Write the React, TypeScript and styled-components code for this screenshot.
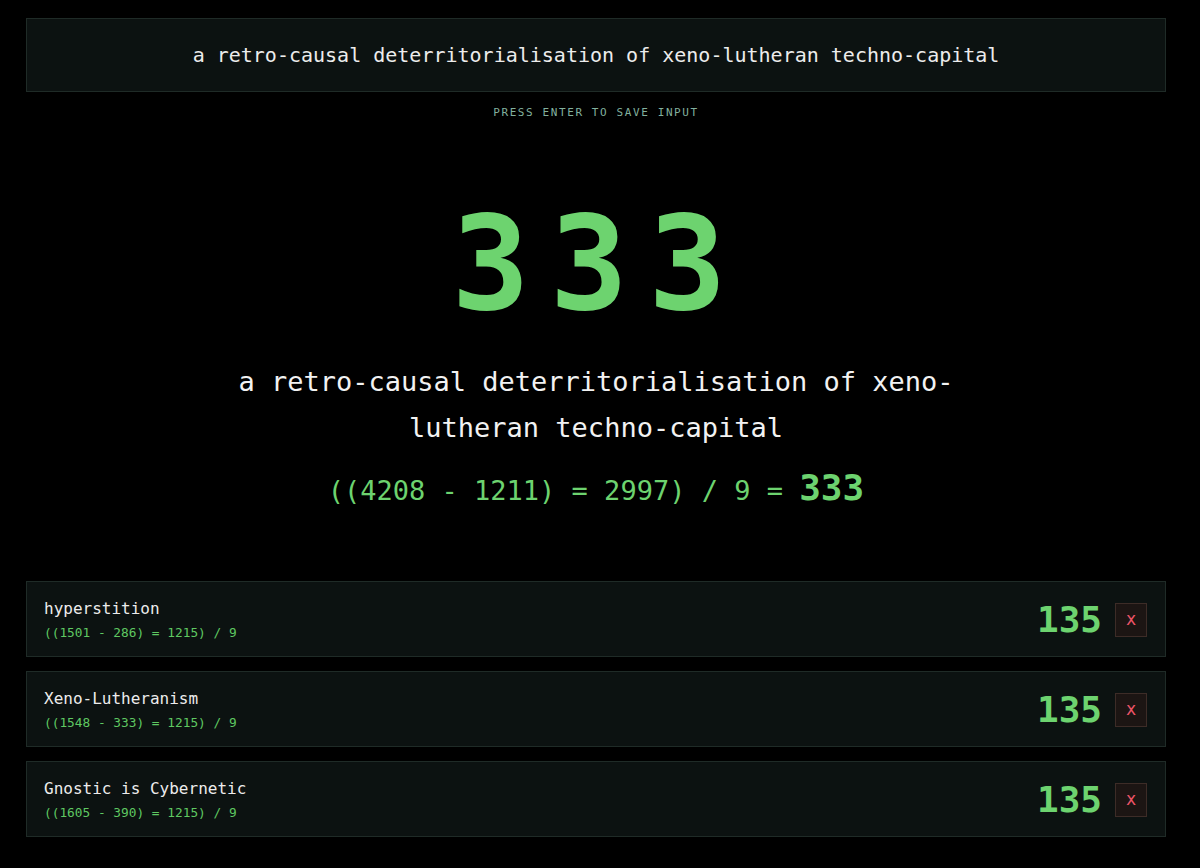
import { useState } from "react";
import styled, { createGlobalStyle } from "styled-components";

const GlobalStyle = createGlobalStyle`
    html, body {
        margin: 0;
        background: #000;
    }
    body {
        font-family: "DejaVu Sans Mono", "Liberation Mono", monospace;
        color: #ececec;
    }
`;

const Page = styled.div`
    padding: 18px 34px 32px 26px;
    display: flex;
    flex-direction: column;
`;

const Input = styled.input`
    box-sizing: border-box;
    width: 100%;
    height: 74px;
    background: #0c1211;
    border: 1px solid #1f2b27;
    border-radius: 0;
    color: #ececec;
    font-family: inherit;
    font-size: 20px;
    text-align: center;
    outline: none;
    padding: 0 16px;
`;

const Hint = styled.div`
    margin-top: 14px;
    text-align: center;
    font-size: 11px;
    line-height: 13px;
    letter-spacing: 1.6px;
    color: #82b09e;
`;

const Result = styled.section`
    display: flex;
    flex-direction: column;
    align-items: center;
    margin-top: 80px;
`;

const BigNumber = styled.div`
    font-size: 130px;
    line-height: 1;
    font-weight: 700;
    letter-spacing: 20px;
    padding-left: 6px;
    color: #6dd36f;
`;

const Phrase = styled.div`
    margin-top: 30px;
    max-width: 800px;
    text-align: center;
    font-size: 27px;
    line-height: 46px;
    color: #f2f2f2;
`;

const Formula = styled.div`
    margin-top: 12px;
    font-size: 27px;
    line-height: 50px;
    color: #6dd36f;
    white-space: pre;
`;

const FormulaResult = styled.span`
    font-size: 36px;
    font-weight: 700;
`;

const List = styled.ul`
    list-style: none;
    margin: 65px 0 0;
    padding: 0;
    display: flex;
    flex-direction: column;
    gap: 14px;
`;

const Card = styled.li`
    box-sizing: border-box;
    height: 76px;
    display: flex;
    align-items: center;
    justify-content: space-between;
    padding: 1px 18px 0 17px;
    background: #0c1211;
    border: 1px solid #1f2b27;
`;

const Info = styled.div`
    display: flex;
    flex-direction: column;
    gap: 7px;
`;

const Name = styled.span`
    font-size: 16px;
    line-height: 1.2;
    color: #ececec;
`;

const Calc = styled.span`
    font-size: 12.8px;
    line-height: 1.2;
    color: #5fc862;
    white-space: pre;
`;

const Side = styled.div`
    display: flex;
    align-items: center;
    gap: 13px;
`;

const Score = styled.span`
    font-size: 36px;
    font-weight: 700;
    color: #6dd36f;
`;

const RemoveButton = styled.button`
    width: 32px;
    height: 34px;
    padding: 0;
    background: #1c1513;
    border: 1px solid #3d2c27;
    border-radius: 0;
    color: #ee5468;
    font-family: inherit;
    font-size: 17px;
    line-height: 1;
    cursor: pointer;
`;

interface IEntry {
    id: number;
    text: string;
    calc: string;
    score: number;
}

const initial: IEntry[] = [
    { id: 1, text: "hyperstition", calc: "((1501 - 286) = 1215) / 9", score: 135 },
    { id: 2, text: "Xeno-Lutheranism", calc: "((1548 - 333) = 1215) / 9", score: 135 },
    { id: 3, text: "Gnostic is Cybernetic", calc: "((1605 - 390) = 1215) / 9", score: 135 },
];

export default function App() {
    const [value, setValue] = useState("a retro-causal deterritorialisation of xeno-lutheran techno-capital");
    const [entries, setEntries] = useState<IEntry[]>(initial);

    const onRemove = (id: number) => {
        setEntries(entries.filter((e) => e.id !== id));
    };

    return (
        <>
            <GlobalStyle />
            <Page>
                <Input value={value} onChange={(e) => setValue(e.target.value)} />
                <Hint>PRESS ENTER TO SAVE INPUT</Hint>
                <Result>
                    <BigNumber>333</BigNumber>
                    <Phrase>{value}</Phrase>
                    <Formula>
                        {"((4208 - 1211) = 2997) / 9 = "}
                        <FormulaResult>333</FormulaResult>
                    </Formula>
                </Result>
                <List>
                    {entries.map((entry) => (
                        <Card key={entry.id}>
                            <Info>
                                <Name>{entry.text}</Name>
                                <Calc>{entry.calc}</Calc>
                            </Info>
                            <Side>
                                <Score>{entry.score}</Score>
                                <RemoveButton onClick={() => onRemove(entry.id)}>x</RemoveButton>
                            </Side>
                        </Card>
                    ))}
                </List>
            </Page>
        </>
    );
}
